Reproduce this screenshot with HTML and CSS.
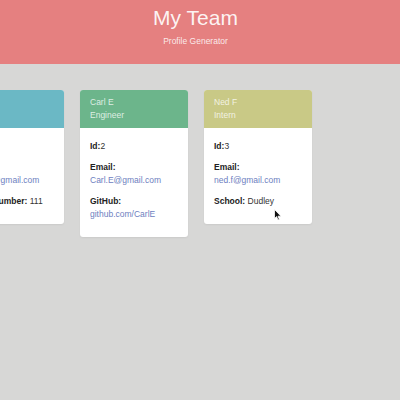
FILE: index.html
```html
<!DOCTYPE html>
<html>
<head>
<meta charset="utf-8">
<link rel="stylesheet" href="styles.css">
</head>
<body>
<header class="banner">
  <h1 class="title">My Team</h1>
  <p class="subtitle">Profile Generator</p>
</header>
<main class="team">
  <div class="card">
    <div class="card-head manager">
      <div>Jared</div>
      <div>Manager</div>
    </div>
    <div class="card-body">
      <p><b>Id:</b>1</p>
      <p><b>Email:</b><br><a>jaredm@gmail.com</a></p>
      <p><b>Office Number:</b> 111</p>
    </div>
  </div>
  <div class="card">
    <div class="card-head engineer">
      <div>Carl E</div>
      <div>Engineer</div>
    </div>
    <div class="card-body">
      <p><b>Id:</b>2</p>
      <p><b>Email:</b><br><a>Carl.E@gmail.com</a></p>
      <p><b>GitHub:</b><br><a>github.com/CarlE</a></p>
    </div>
  </div>
  <div class="card">
    <div class="card-head intern">
      <div>Ned F</div>
      <div>Intern</div>
    </div>
    <div class="card-body">
      <p><b>Id:</b>3</p>
      <p><b>Email:</b><br><a>ned.f@gmail.com</a></p>
      <p><b>School:</b> Dudley</p>
    </div>
  </div>
</main>
<svg class="cursor" width="8" height="12" viewBox="0 0 8 12"><path d="M0.5 0.5 L0.5 9.5 L2.6 7.6 L4 11 L5.4 10.4 L4 7.2 L7 7.2 Z" fill="#111" stroke="#fff" stroke-width="0.8"/></svg>
</body>
</html>
```
FILE: styles.css
```css
html, body {
  margin: 0;
  padding: 0;
}
body {
  background: #d7d7d6;
  font-family: "Liberation Sans", Arial, sans-serif;
  width: 400px;
  height: 400px;
  overflow: hidden;
  position: relative;
}
.banner {
  background: #e58080;
  height: 64px;
  box-sizing: border-box;
  padding: 6px 9px 0 0;
  text-align: center;
  color: rgba(255, 255, 255, 0.92);
}
.title {
  margin: 0;
  font-size: 21px;
  line-height: 24px;
  font-weight: normal;
}
.subtitle {
  margin: 5px 0 0;
  font-size: 8.5px;
  line-height: 12px;
  color: rgba(255, 255, 255, 0.85);
}
.team {
  display: flex;
  align-items: flex-start;
  gap: 16px;
  margin-top: 26px;
  margin-left: -44px;
}
.card {
  width: 108px;
  flex: 0 0 108px;
  background: #fff;
  border-radius: 3px;
  overflow: hidden;
  box-shadow: 0 1px 2px rgba(0, 0, 0, 0.06);
  font-size: 8.5px;
  line-height: 13px;
}
.card-head {
  padding: 6px 10px;
  color: rgba(255, 255, 255, 0.78);
}
.manager { background: #6bb8c5; }
.engineer { background: #6cb58b; }
.intern { background: #c9c986; }
.card-body {
  padding: 12px 10px 8px;
  color: #333;
}
.card-body p {
  margin: 0 0 8px;
}
.card-body b {
  color: #222;
}
.card-body a {
  color: #6d80c0;
}
.cursor {
  position: absolute;
  left: 274px;
  top: 209px;
}
```
